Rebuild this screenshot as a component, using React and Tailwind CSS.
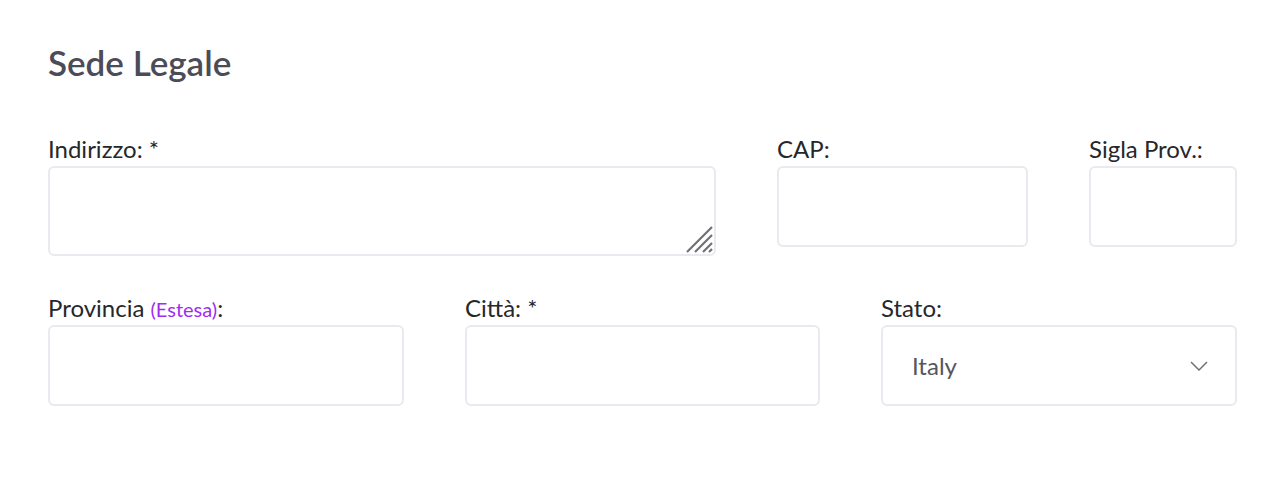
import React from 'react';

const Field = ({ label, className = '', children }) => (
    <div className={`flex flex-col ${className}`}>
        <label className="h-[29px] text-[24px] leading-[24px] text-[#26272b] whitespace-nowrap">{label}</label>
        {children}
    </div>
);

const boxClass = 'h-[81px] w-full rounded-[6px] border-2 border-[#e9e9ef] bg-white outline-none';

export default function App() {
    return (
        <div className="min-h-[484px] bg-white px-12 pt-[38px] font-['Lato',sans-serif]">
            <h2 className="text-[35px] leading-[48px] font-semibold text-[#4b4c57]">Sede Legale</h2>

            <div className="mt-[51px] flex items-start gap-[61px]">
                <Field label="Indirizzo: *" className="w-[668px]">
                    <div className="relative h-[90px]">
                        <textarea className="h-full w-full resize-none rounded-[6px] border-2 border-[#e9e9ef] bg-white outline-none" />
                        <svg className="pointer-events-none absolute bottom-[2px] right-[2px]" width="30" height="30" viewBox="0 0 30 30">
                            <g stroke="#6f6f73" strokeWidth="2.2" strokeLinecap="butt">
                                <line x1="3" y1="28" x2="28" y2="3" />
                                <line x1="11" y1="28" x2="28" y2="11" />
                                <line x1="19" y1="28" x2="28" y2="19" />
                                <line x1="25" y1="28" x2="28" y2="25" />
                            </g>
                        </svg>
                    </div>
                </Field>
                <Field label="CAP:" className="w-[251px]">
                    <input type="text" className={boxClass} />
                </Field>
                <Field label="Sigla Prov.:" className="w-[148px]">
                    <input type="text" className={boxClass} />
                </Field>
            </div>

            <div className="mt-[40px] flex items-start gap-[61px]">
                <Field
                    label={<>Provincia <span className="text-[20px] text-[#a12cf0]">(Estesa)</span>:</>}
                    className="w-[356px]"
                >
                    <input type="text" className={boxClass} />
                </Field>
                <Field label="Città: *" className="w-[355px]">
                    <input type="text" className={boxClass} />
                </Field>
                <Field label="Stato:" className="w-[356px]">
                    <div className={`${boxClass} flex items-center justify-between pl-[29px] pr-[27px]`}>
                        <span className="text-[24px] text-[#55565f]">Italy</span>
                        <svg width="18" height="10" viewBox="0 0 18 10" fill="none">
                            <polyline points="1,1 9,9 17,1" stroke="#707079" strokeWidth="1.5" />
                        </svg>
                    </div>
                </Field>
            </div>
        </div>
    );
}
